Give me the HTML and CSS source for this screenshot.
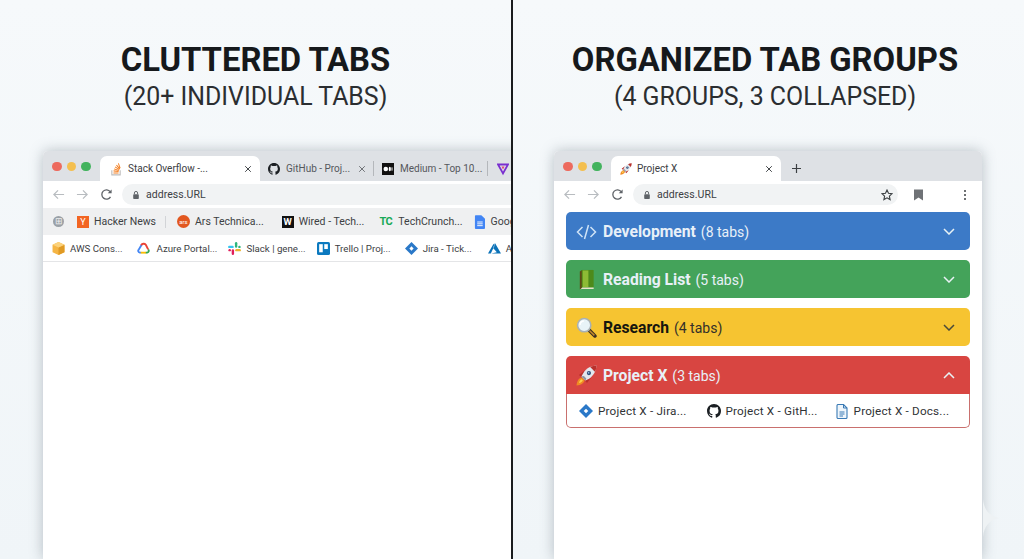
FILE: index.html
```html
<!DOCTYPE html>
<html lang="en">
<head>
<meta charset="utf-8">
<title>Cluttered tabs vs organized tab groups</title>
<link rel="stylesheet" href="styles.css">
</head>
<body>
<svg class="defs" width="0" height="0" aria-hidden="true">
  <defs>
    <symbol id="gh" viewBox="0 0 16 16"><path fill="#1b1f23" d="M8 0C3.58 0 0 3.58 0 8c0 3.54 2.29 6.53 5.47 7.59.4.07.55-.17.55-.38 0-.19-.01-.82-.01-1.49-2.01.37-2.53-.49-2.69-.94-.09-.23-.48-.94-.82-1.13-.28-.15-.68-.52-.01-.53.63-.01 1.08.58 1.23.82.72 1.21 1.87.87 2.33.66.07-.52.28-.87.51-1.07-1.78-.2-3.64-.89-3.64-3.95 0-.87.31-1.59.82-2.15-.08-.2-.36-1.02.08-2.12 0 0 .67-.21 2.2.82.64-.18 1.32-.27 2-.27.68 0 1.36.09 2 .27 1.53-1.04 2.2-.82 2.2-.82.44 1.1.16 1.92.08 2.12.51.56.82 1.27.82 2.15 0 3.07-1.87 3.75-3.65 3.95.29.25.54.73.54 1.48 0 1.07-.01 1.93-.01 2.2 0 .21.15.46.55.38A8.013 8.013 0 0016 8c0-4.42-3.58-8-8-8z"/></symbol>
    <symbol id="back" viewBox="0 0 14 14"><path fill="none" stroke="currentColor" stroke-width="1.3" d="M13 7H2M6.5 2.5 2 7l4.5 4.5"/></symbol>
    <symbol id="fwd" viewBox="0 0 14 14"><path fill="none" stroke="currentColor" stroke-width="1.3" d="M1 7h11M7.5 2.5 12 7l-4.500 4.500"/></symbol>
    <symbol id="reload" viewBox="0 0 14 14"><path fill="none" stroke="#5f6368" stroke-width="1.4" d="M11.300 9.500A5 5 0 1 1 11 4"/><path fill="#5f6368" d="M12.500 1.500v4.200H8.300z"/></symbol>
    <symbol id="lock" viewBox="0 0 10 12"><path fill="none" stroke="#5f6368" stroke-width="1.200" d="M3 5V3.500a2 2 0 0 1 4 0V5"/><rect x="1.500" y="5" width="7" height="6" rx="1" fill="#5f6368"/></symbol>
    <symbol id="x" viewBox="0 0 10 10"><path fill="none" stroke="currentColor" stroke-width="1.200" d="M1.500 1.500l7 7M8.500 1.500l-7 7"/></symbol>
    <symbol id="so" viewBox="0 0 14 16"><path fill="#bcbbbb" d="M1.500 9.500h1.300v4.700h8.400V9.500h1.300v6h-11z"/><path fill="#f48024" d="M4 12h6v1.200H4zM4.200 9.600l5.900.7-.1 1.200-5.900-.7zM4.900 7.300l5.600 1.900-.4 1.100-5.600-1.900zM6.200 5l5 3.200-.6 1-5-3.200zM8 3l3.900 4.500-.9.800L7.100 3.800zM10.300 1.200l2.100 5.500-1.100.4-2.100-5.500z"/></symbol>
    <symbol id="rocket" viewBox="0 0 20 20"><path fill="#f08a24" d="M6 11.500C2.500 12.500.8 15.500.5 19.500c4-.3 7-2 8-5.500z"/><path fill="#fcd34d" d="M5.500 13.500c-1.500.6-2.300 1.800-2.600 3.600 1.800-.3 3-1.100 3.600-2.600z"/><path fill="#b9302c" d="M2.800 9.500 8 5.500 6.500 12.500zM10.500 17.200 14.500 12 7.500 13.500z"/><path fill="#e3e7ec" d="M19.500.5C14 .8 10 3.200 7 7.500L5.200 11 9 14.800l3.500-1.800C16.800 10 19.200 6 19.500.5z"/><path fill="#b9302c" d="M19.500.5c-2.300.1-4.300.6-6 1.500L18 6.500C18.900 4.800 19.400 2.800 19.500.5z"/><circle cx="12.300" cy="7.700" r="2" fill="#2f4e78"/><circle cx="12" cy="7.400" r=".8" fill="#9cc3e6"/><path fill="#8b94a0" d="M7.500 10.500 9.800 12.800 9 14.800 5.200 11z"/></symbol>
    <symbol id="book" viewBox="0 0 16 22"><path fill="#5e4a17" d="M1 2.500 3.500 1v19L1 21.500z"/><path fill="#4d8a1a" d="M3 1h12.500v18.500H3z"/><path fill="#8dbb35" d="M4 1.500h6v17.500H4z"/><path fill="#e9e4c8" d="M1.500 21.500 3.500 19.500h12V21H3z"/></symbol>
    <symbol id="mag" viewBox="0 0 20 20"><path stroke="#3b2f22" stroke-width="3.400" stroke-linecap="round" d="M12.500 12.500 18 18"/><path stroke="#c48a2c" stroke-width="1.400" d="M13 13l4.500 4.500"/><circle cx="7.800" cy="7.800" r="6.300" fill="#e8f3f7" stroke="#a9b1b4" stroke-width="1.500"/><path fill="none" stroke="#fff" stroke-width="1.500" d="M3.800 7.500A4 4 0 0 1 7.500 3.800"/></symbol>
    <symbol id="jira" viewBox="0 0 14 14"><path fill="#2a78c8" d="M7 0l7 7-7 7-7-7z"/><path fill="#fff" d="M7 4.700 9.300 7 7 9.300 4.700 7z"/></symbol>
    <symbol id="doc" viewBox="0 0 12 15"><path fill="#eef5fb" stroke="#3a7ab5" stroke-width="1.100" d="M1 1.500a1 1 0 0 1 1-1h5.500L11 4v9.500a1 1 0 0 1-1 1H2a1 1 0 0 1-1-1z"/><path fill="none" stroke="#3a7ab5" stroke-width="1" d="M7.500.5V4H11M3.500 8h5M3.500 10h5M3.500 12h3.500"/></symbol>
  </defs>
</svg>

<main class="page">
  <section class="panel">
    <header class="heading">
      <h1>CLUTTERED TABS</h1>
      <p>(20+ INDIVIDUAL TABS)</p>
    </header>
    <div class="window window-left">
      <div class="tabstrip">
        <div class="lights"><i class="red"></i><i class="amber"></i><i class="green"></i></div>
        <div class="tab active tab-so">
          <svg class="fav"><use href="#so"/></svg>
          <span class="tab-title">Stack Overflow -...</span>
          <svg class="close"><use href="#x"/></svg>
        </div>
        <div class="tab tab-gh">
          <svg class="fav"><use href="#gh"/></svg>
          <span class="tab-title">GitHub - Proj...</span>
          <svg class="close"><use href="#x"/></svg>
        </div>
        <div class="tab tab-med">
          <svg class="fav medium" viewBox="0 0 12 12"><rect width="12" height="12" fill="#111"/><circle cx="3.800" cy="6" r="2.300" fill="#fff"/><ellipse cx="7.800" cy="6" rx="1.100" ry="2.200" fill="#fff"/><ellipse cx="10" cy="6" rx=".5" ry="2" fill="#fff"/></svg>
          <span class="tab-title">Medium - Top 10...</span>
        </div>
        <div class="tab tab-last">
          <svg class="fav" viewBox="0 0 12 12"><path fill="none" stroke="#7a2fd0" stroke-width="1.800" d="M1 1.500h10L6 10.500z"/><path fill="#e0457b" d="M4.500 3.500h3L6 6.500z"/></svg>
        </div>
      </div>
      <div class="toolbar">
        <svg class="nav dim"><use href="#back"/></svg>
        <svg class="nav dim"><use href="#fwd"/></svg>
        <svg class="nav"><use href="#reload"/></svg>
        <div class="omnibox omnibox-left">
          <svg class="lock"><use href="#lock"/></svg>
          <span>address.URL</span>
        </div>
      </div>
      <div class="bookmarks row-grey">
        <span class="pin">⊞</span>
        <a class="bm bm-hn"><i class="hn">Y</i>Hacker News</a>
        <span class="bm-sep"></span>
        <a class="bm bm-ars"><i class="ars">ars</i>Ars Technica...</a>
        <a class="bm bm-wired"><i class="wired">W</i>Wired - Tech...</a>
        <a class="bm bm-tc"><i class="tc">TC</i>TechCrunch...</a>
        <a class="bm"><svg class="fav-doc" viewBox="0 0 12 15"><path fill="#4285f4" d="M1 1a1 1 0 0 1 1-1h6l4 4v10a1 1 0 0 1-1 1H2a1 1 0 0 1-1-1z"/><path stroke="#fff" d="M3.500 7.500h6M3.500 9.500h6M3.500 11.500h6"/></svg>Google Docs</a>
      </div>
      <div class="bookmarks row-white">
        <a class="bm bm-aws"><svg class="fav" viewBox="0 0 12 12"><path fill="#f5b544" d="M6 0l5.500 2.500v7L6 12 .5 9.500v-7z"/><path fill="#e09a24" d="M6 5v7l5.500-2.500v-7z"/><path fill="#fbd27c" d="M6 0l5.500 2.500L6 5 .5 2.500z"/></svg>AWS Cons...</a>
        <a class="bm bm-az"><svg class="fav" viewBox="0 0 14 12"><path fill="none" stroke="#4285f4" stroke-width="2" d="M4.500 10.500H3A2 2 0 0 1 2 7l3-5"/><path fill="none" stroke="#fbbc04" stroke-width="2" d="M4 10.500h6"/><path fill="none" stroke="#34a853" stroke-width="2" d="M9.500 10.500H11a2 2 0 0 0 1-3.500"/><path fill="none" stroke="#ea4335" stroke-width="2" d="M4.500 2.500A3 3 0 0 1 9.500 2l2.500 5"/></svg>Azure Portal...</a>
        <a class="bm bm-slack"><svg class="fav" viewBox="0 0 12 12" stroke-width="2.200" stroke-linecap="round"><path stroke="#36c5f0" d="M1.200 4.500h3"/><path stroke="#2eb67d" d="M7.500 1.200v3"/><path stroke="#ecb22e" d="M10.800 7.500h-3"/><path stroke="#e01e5a" d="M4.500 10.800v-3"/><path stroke="#2eb67d" d="M10.500 4.500h.1"/><path stroke="#e01e5a" d="M1.500 7.500h.1"/></svg>Slack | gene...</a>
        <a class="bm bm-trello"><svg class="fav" viewBox="0 0 12 12"><rect width="12" height="12" rx="1.500" fill="#0b79bf"/><rect x="2" y="2" width="3.300" height="7.500" fill="#fff"/><rect x="6.700" y="2" width="3.300" height="4.500" fill="#fff"/></svg>Trello | Proj...</a>
        <a class="bm bm-jira"><svg class="fav"><use href="#jira"/></svg>Jira - Tick...</a>
        <a class="bm"><svg class="fav" viewBox="0 0 14 12"><path fill="#0a72b8" d="M7.500 0 14 11.500H3.500l6-1.500-4-4.500zM6 1 0 11.500h3L7 3z"/></svg>Azure</a>
      </div>
    </div>
  </section>

  <div class="divider"></div>

  <section class="panel">
    <header class="heading heading-right">
      <h1>ORGANIZED TAB GROUPS</h1>
      <p>(4 GROUPS, 3 COLLAPSED)</p>
    </header>
    <div class="window window-right">
      <div class="tabstrip">
        <div class="lights"><i class="red"></i><i class="amber"></i><i class="green"></i></div>
        <div class="tab active tab-px">
          <svg class="fav"><use href="#rocket"/></svg>
          <span class="tab-title dark">Project X</span>
          <svg class="close"><use href="#x"/></svg>
        </div>
        <svg class="newtab" viewBox="0 0 10 10"><path fill="none" stroke="#3c4043" stroke-width="1.300" d="M5 0v10M0 5h10"/></svg>
      </div>
      <div class="toolbar">
        <svg class="nav dim"><use href="#back"/></svg>
        <svg class="nav dim"><use href="#fwd"/></svg>
        <svg class="nav"><use href="#reload"/></svg>
        <div class="omnibox omnibox-right">
          <svg class="lock"><use href="#lock"/></svg>
          <span>address.URL</span>
          <svg class="star" viewBox="0 0 12 12"><path fill="none" stroke="#3c4043" stroke-width="1.100" d="M6 1l1.500 3.300 3.500.4-2.600 2.400.7 3.500L6 8.800l-3.100 1.800.7-3.500L1 4.700l3.500-.4z"/></svg>
        </div>
        <svg class="bookmark-btn" viewBox="0 0 10 12"><path fill="#6f7276" d="M0 0h10v12L5 8.800 0 12z"/></svg>
        <span class="dots"><i></i><i></i><i></i></span>
      </div>
      <div class="groups">
        <div class="group blue">
          <svg class="g-icon code" viewBox="0 0 20 16"><path fill="none" stroke="#cfe3f7" stroke-width="1.500" d="M6 3 1 8l5 5M14 3l5 5-5 5M12 1 8 15"/></svg>
          <span class="g-label"><b>Development</b> (8 tabs)</span>
          <svg class="chev" viewBox="0 0 12 7"><path d="M1 1l5 5 5-5"/></svg>
        </div>
        <div class="group green-bg">
          <svg class="g-icon"><use href="#book"/></svg>
          <span class="g-label"><b>Reading List</b> (5 tabs)</span>
          <svg class="chev" viewBox="0 0 12 7"><path d="M1 1l5 5 5-5"/></svg>
        </div>
        <div class="group yellow">
          <svg class="g-icon"><use href="#mag"/></svg>
          <span class="g-label"><b>Research</b> (4 tabs)</span>
          <svg class="chev" viewBox="0 0 12 7"><path d="M1 1l5 5 5-5"/></svg>
        </div>
        <div class="open-group">
          <div class="group red-bg">
            <svg class="g-icon"><use href="#rocket"/></svg>
            <span class="g-label"><b>Project X</b> (3 tabs)</span>
            <svg class="chev" viewBox="0 0 12 7"><path d="M1 6l5-5 5 5"/></svg>
          </div>
          <div class="group-tabs">
            <a class="gt gt-jira"><svg class="gt-fav"><use href="#jira"/></svg>Project X - Jira...</a>
            <a class="gt gt-gh"><svg class="gt-fav"><use href="#gh"/></svg>Project X - GitH...</a>
            <a class="gt"><svg class="gt-fav gt-doc"><use href="#doc"/></svg>Project X - Docs...</a>
          </div>
        </div>
      </div>
    </div>
  </section>
  <svg class="sparkle" viewBox="0 0 17 38"><path fill="#eef2f4" d="M0 0c1.200 11 6 17 17 19C6 21 1.200 27 0 38z"/></svg>
</main>
</body>
</html>
```
FILE: styles.css
```css
* { box-sizing: border-box; margin: 0; padding: 0; }
html, body { height: 100%; overflow: hidden; }
body {
  width: 1024px;
  height: 559px;
  background: #f3f7fa;
  font-family: Roboto, "Liberation Sans", sans-serif;
  color: #202124;
}
.defs { position: absolute; }
.page {
  position: relative;
  display: grid;
  grid-template-columns: 511px 2px 511px;
  height: 559px;
  overflow: hidden;
  background: linear-gradient(180deg, #f6f9fb 0%, #f0f5f8 100%);
}
.divider { background: #1a1c1e; }
.panel { display: flex; flex-direction: column; min-width: 0; overflow: hidden; }

.heading { height: 151px; flex: none; padding-top: 42px; text-align: center; }
.heading-right { padding-right: 7px; }
.heading h1 {
  font-size: 32.800px;
  line-height: 37px;
  font-weight: 700;
  color: #16191c;
}
.heading p {
  font-size: 24.900px;
  line-height: 35px;
  color: #2b2e31;
}

.window {
  flex: 1;
  background: #fff;
  border-radius: 5px 5px 0 0;
  box-shadow: 0 0 14px rgba(90, 105, 118, .4);
}
.window-left { margin-left: 43px; width: 520px; }
.window-right { margin-left: 41px; width: 428px; }

.tabstrip {
  display: flex;
  align-items: flex-end;
  height: 30px;
  background: #dee1e5;
  border-radius: 5px 5px 0 0;
}
.lights { display: flex; gap: 5px; align-self: center; padding: 0 9.500px 0 9px; margin-top: 1px; }
.lights i { width: 9.500px; height: 9.500px; border-radius: 50%; }
.lights .red { background: #ed6a5e; }
.lights .amber { background: #f4bf4f; }
.lights .green { background: #43b35e; }

.tab {
  display: flex;
  align-items: center;
  height: 25px;
  font-size: 10px;
  color: #55585c;
  white-space: nowrap;
}
.tab.active {
  background: #fff;
  color: #3c4043;
  border-radius: 7px 7px 0 0;
}
.tab-so { width: 160px; padding-left: 9px; }
.tab-gh { width: 114px; padding-left: 8px; border-right: 1px solid #b4b7bb; height: 15px; margin-bottom: 5px; }
.tab-med { width: 114px; padding-left: 8px; border-right: 1px solid #b4b7bb; height: 15px; margin-bottom: 5px; }
.tab-last { padding-left: 9px; height: 15px; margin-bottom: 5px; }
.tab-px { width: 170px; padding-left: 9px; }
.fav { width: 12px; height: 14px; flex: none; }
.tab .fav { margin-right: 6px; }
.tab-so .fav { margin-left: 1px; margin-right: 6px; }
.tab-px .fav { margin-right: 5px; }
.tab-title { flex: 1; }
.tab-title.dark { color: #3c4043; }
.close { width: 8px; height: 8px; margin-right: 8px; color: #3c4043; flex: none; }
.tab-gh .close { margin-right: 7px; color: #6b6e72; }
.tab .medium { height: 12px; }
.newtab { width: 9px; height: 9px; margin: 0 0 8px 11px; }

.toolbar {
  display: flex;
  align-items: center;
  height: 27px;
  background: #fff;
  padding-left: 9px;
}
.nav { width: 13px; height: 13px; margin-right: 11px; color: #5f6368; flex: none; }
.nav.dim { color: #b8bcc0; }
.omnibox {
  display: flex;
  align-items: center;
  height: 21px;
  background: #f1f3f4;
  border-radius: 11px;
  padding-left: 10px;
  font-size: 10.500px;
  letter-spacing: .05px;
  color: #3c4043;
  margin-left: -2px;
}
.omnibox-left { width: 400px; }
.omnibox-right { width: 265px; }
.lock { width: 8px; height: 10px; margin-right: 6px; flex: none; }
.star { width: 12px; height: 12px; margin-left: auto; margin-right: 5px; }
.bookmark-btn { width: 9px; height: 12px; margin-left: 16px; }
.dots { display: flex; flex-direction: column; gap: 2px; margin-left: 41px; }
.dots i { width: 2px; height: 2px; background: #3c4043; border-radius: 50%; }

.bookmarks {
  display: flex;
  align-items: center;
  height: 27px;
  font-size: 10.500px;
  color: #3c4043;
  white-space: nowrap;
}
.row-grey { background: #eff0f1; padding-left: 10px; }
.row-white { background: #fff; border-bottom: 1px solid #e4e5e7; padding-left: 9px; font-size: 9.700px; }
.pin {
  width: 11px; height: 11px; margin-right: 13px;
  border-radius: 50%;
  background: #9aa0a6; color: #eee;
  font-size: 9px; line-height: 11px; text-align: center;
}
.bm { display: flex; align-items: center; flex: none; }
.bm .fav { margin-right: 5px; height: 13px; width: 13px; }
.bm i { font-style: normal; flex: none; display: block; text-align: center; margin-right: 5px; }
.hn { width: 12px; height: 12px; background: #f26522; color: #fff; font-size: 9px; line-height: 12px; }
.ars { width: 13px; height: 13px; border-radius: 50%; background: #e2571f; color: #fff; font-size: 6px; line-height: 13px; }
.wired { width: 12px; height: 12px; background: #111; color: #fff; font-size: 9.500px; line-height: 12px; font-weight: 700; }
.tc { width: 15px; color: #18a957; font-size: 11px; line-height: 12px; font-weight: 700; letter-spacing: -.5px; }
.fav-doc { width: 11px; height: 14px; margin-right: 6px; flex: none; }
.bm-hn { margin-right: 9px; }
.bm-sep { width: 1px; height: 12px; background: #d2d4d7; margin-right: 11px; flex: none; }
.bm-ars { margin-right: 18px; }
.bm-wired { margin-right: 14px; }
.bm-tc { margin-right: 11px; }
.bm-aws { margin-right: 14px; }
.bm-az { margin-right: 11px; }
.bm-az .fav { margin-right: 7px; }
.bm-slack { margin-right: 11px; }
.bm-trello { margin-right: 14px; }
.bm-jira { margin-right: 16px; }

.groups { display: flex; flex-direction: column; gap: 10px; padding: 4px 12px 0; }
.group {
  display: flex;
  align-items: center;
  height: 38px;
  padding: 1px 15px 0 10px;
  border-radius: 5px;
  font-size: 14px;
  color: #e8f0f8;
}
.group b { font-size: 15.700px; font-weight: 700; margin-right: 1.500px; }
.blue { background: #3c7ac7; }
.green-bg { background: #44a35a; }
.yellow { background: #f6c431; color: #33302a; }
.yellow b { color: #17160f; }
.red-bg { background: #d84541; border-radius: 5px 5px 0 0; }
.g-icon { width: 21px; height: 21px; flex: none; margin-right: 6px; }
.g-icon.code { height: 16px; }
.g-label { flex: 1; }
.chev { width: 12px; height: 7px; fill: none; stroke: #e8f2f5; stroke-width: 1.500; }
.yellow .chev { stroke: #4a4a3a; }
.open-group { display: flex; flex-direction: column; }
.group-tabs {
  display: flex;
  align-items: center;
  height: 34px;
  padding: 1px 0 0 12px;
  background: #fff;
  border: 1px solid #c9706e;
  border-top: 0;
  border-radius: 0 0 5px 5px;
  font-size: 11.700px;
  letter-spacing: .2px;
  color: #2f3235;
  white-space: nowrap;
}
.gt { display: flex; align-items: center; flex: none; }
.gt-fav { width: 14px; height: 14px; margin-right: 5px; flex: none; }
.gt-doc { width: 12px; height: 15px; margin-right: 6px; }
.gt-jira { margin-right: 20px; }
.gt-gh { margin-right: 18px; }

.sparkle { position: absolute; left: 983px; top: 499px; width: 17px; height: 38px; }
```
